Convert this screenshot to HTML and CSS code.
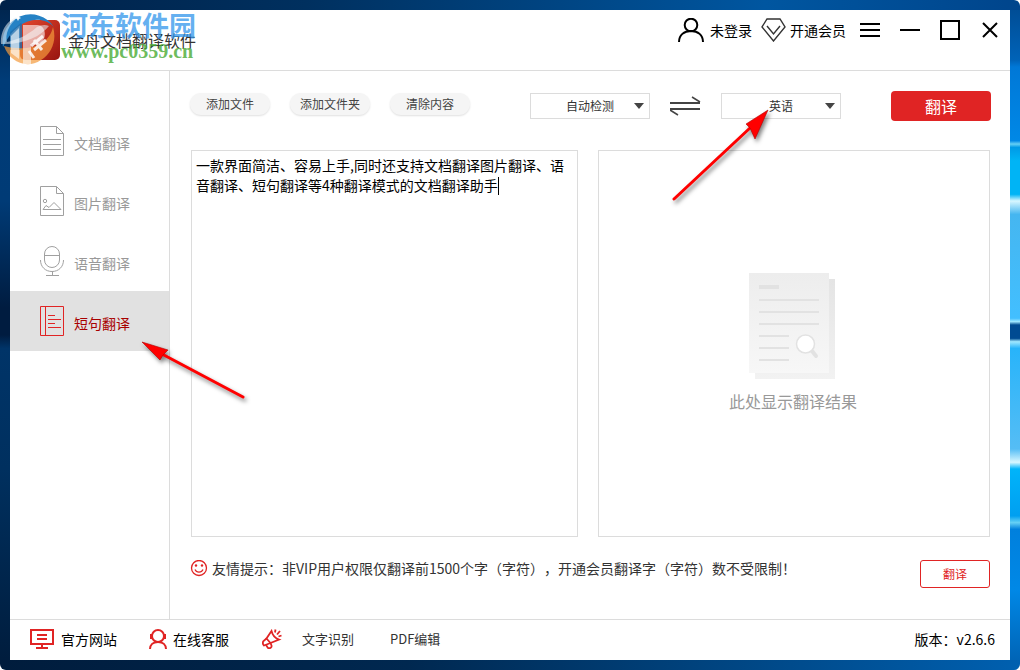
FILE: index.html
```html
<!DOCTYPE html>
<html lang="zh-CN">

<head>
    <title>金舟文档翻译软件</title>
    <meta charset="utf-8">
    <meta name="viewport" content="width=device-width, initial-scale=1.0">
    <link rel="stylesheet" href="styles.css">
</head>

<body>
    <div class="desktop">
        <div class="window">
            <header class="topbar">
                <div class="brand">
                    <svg class="logo" width="50" height="42" viewBox="0 0 50 42">
                        <defs>
                            <linearGradient id="red" x1="0" y1="0" x2="1" y2="1">
                                <stop offset="0" stop-color="#e4472c" />
                                <stop offset="1" stop-color="#971410" />
                            </linearGradient>
                        </defs>
                        <rect x="10" y="1" width="40" height="40" rx="5" fill="url(#red)" />
                    </svg>
                    <h1>金舟文档翻译软件</h1>
                </div>

                <div class="account">
                    <button class="user">
                        <svg width="26" height="24" viewBox="0 0 26 24" fill="none" stroke="#000" stroke-width="2">
                            <circle cx="13" cy="7" r="6.3" />
                            <path d="M1 24C1 17 6 13 13 13s12 4 12 11" />
                        </svg>
                        未登录
                    </button>
                    <button class="vip">
                        <svg width="25" height="24" viewBox="0 0 25 24" fill="none" stroke="#333" stroke-width="1.4">
                            <path d="M6 1h13l5 8-11.5 14L1 9z" />
                            <path d="M6 8l6.500 8L19 8" />
                        </svg>
                        开通会员
                    </button>
                    <button aria-label="菜单">
                        <svg width="20" height="20" viewBox="0 0 20 20" stroke="#000" stroke-width="2">
                            <path d="M0 4h20M0 10h20M0 16h20" />
                        </svg>
                    </button>
                    <button aria-label="最小化">
                        <svg width="20" height="20" viewBox="0 0 20 20" stroke="#000" stroke-width="2">
                            <path d="M0 10h20" />
                        </svg>
                    </button>
                    <button aria-label="最大化">
                        <svg width="20" height="20" viewBox="0 0 20 20" fill="none" stroke="#000" stroke-width="2">
                            <rect x="1" y="1" width="18" height="18" />
                        </svg>
                    </button>
                    <button aria-label="关闭">
                        <svg width="20" height="20" viewBox="0 0 20 20" stroke="#000" stroke-width="2">
                            <path d="M3 3l14 14M17 3L3 17" />
                        </svg>
                    </button>
                </div>
            </header>

            <div class="content">
                <nav>
                    <button>
                        <svg width="24" height="30" viewBox="0 0 24 30" fill="none" stroke="#a0a0a0">
                            <path d="M.5.5h16l7 7v22H.5zM16.500.5v7h7M3 13.500h18M3 18.500h18M3 23.500h18" />
                        </svg>
                        文档翻译
                    </button>
                    <button>
                        <svg width="24" height="30" viewBox="0 0 24 30" fill="none" stroke="#a0a0a0">
                            <path d="M.5.5h16l7 7v22H.5zM16.500.5v7h7" />
                            <circle cx="5" cy="15" r="1.700" />
                            <path d="M3 23.500l3-4 3 2 5-5 7 7z" />
                        </svg>
                        图片翻译
                    </button>
                    <button>
                        <svg width="24" height="30" viewBox="0 0 24 30" fill="none" stroke="#a0a0a0">
                            <rect x="4.500" y=".5" width="15" height="21" rx="7.500" />
                            <path d="M4.500 9.500h15M.5 14c0 7 5 11.500 11.500 11.500S23.500 21 23.500 14M12.500 25.500v4M6 29.500h13" />
                        </svg>
                        语音翻译
                    </button>
                    <button class="valgt">
                        <svg width="24" height="30" viewBox="0 0 24 30" fill="none" stroke="#e02424">
                            <path d="M.5.5h23v29H.5zM5.500.5v29M8 9.500h7M8 13.500h13M8 17.500h7M8 21.500h13" />
                        </svg>
                        短句翻译
                    </button>
                </nav>

                <main>
                    <div class="toolbar">
                        <button class="pill">添加文件</button>
                        <button class="pill">添加文件夹</button>
                        <button class="pill">清除内容</button>

                        <div class="languages">
                            <div class="choice">
                                <select aria-label="源语言">
                                    <option>自动检测</option>
                                    <option>中文</option>
                                </select>
                            </div>
                            <button class="swap" aria-label="交换语言">
                                <svg width="31" height="20" viewBox="0 0 31 20" fill="none" stroke="#444" stroke-width="2">
                                    <path d="M0 7h30M0 13h30" />
                                    <path d="M22 1l8 5M8 19l-8-5" stroke-width="1.500" />
                                </svg>
                            </button>
                            <div class="choice">
                                <select aria-label="目标语言">
                                    <option>英语</option>
                                    <option>日语</option>
                                </select>
                            </div>
                        </div>
                        <button class="translate">翻译</button>
                    </div>

                    <div class="panels">
                        <div class="source">
                            <textarea aria-label="原文" spellcheck="false">一款界面简洁、容易上手,同时还支持文档翻译图片翻译、语音翻译、短句翻译等4种翻译模式的文档翻译助手</textarea>
                            <span class="caret"></span>
                        </div>
                        <section class="result">
                            <svg width="88" height="106" viewBox="0 0 88 106">
                                <defs>
                                    <linearGradient id="paper" x1="0" y1="0" x2="0" y2="1">
                                        <stop offset="0" stop-color="#ededed" />
                                        <stop offset="1" stop-color="#f7f7f7" />
                                    </linearGradient>
                                    <linearGradient id="back" x1="0" y1="0" x2="0" y2="1">
                                        <stop offset="0" stop-color="#e4e4e4" />
                                        <stop offset="1" stop-color="#f2f2f2" />
                                    </linearGradient>
                                </defs>
                                <rect x="6" y="6" width="80" height="100" fill="url(#back)" />
                                <rect x="0" y="0" width="80" height="100" fill="url(#paper)" />
                                <path d="M10 14h20" stroke="#e2e2e2" stroke-width="4" />
                                <path d="M10 27h60M10 39h60M10 51h60M10 63h30M10 75h30M10 87h30" stroke="#e2e2e2" stroke-width="2" />
                                <path d="M63 78l4 5" stroke="#e2e2e2" stroke-width="4" stroke-linecap="round" />
                                <circle cx="56.500" cy="71" r="9" fill="#fff" stroke="#e2e2e2" stroke-width="1.500" />
                            </svg>
                            <p>此处显示翻译结果</p>
                        </section>
                    </div>

                    <div class="tip">
                        <svg width="18" height="18" viewBox="0 0 18 18" fill="none" stroke="#e02424" stroke-width="1.300">
                            <circle cx="9" cy="8" r="7.500" />
                            <path d="M5 9.500c1.500 3.500 6.500 3.500 8 0" />
                            <circle cx="6" cy="5.500" r="1.200" fill="#e02424" stroke="none" />
                            <circle cx="12" cy="5.500" r="1.200" fill="#e02424" stroke="none" />
                        </svg>
                        <p>友情提示<span class="colon">：</span>非VIP用户权限仅翻译前1500个字（字符），开通会员翻译字（字符）数不受限制！</p>
                        <button>翻译</button>
                    </div>
                </main>
            </div>

            <footer>
                <a class="site" href="#">
                    <svg width="24" height="20" viewBox="0 0 24 20" fill="none" stroke="#e02424" stroke-width="2">
                        <path d="M1 1h22v14H1zM12 15v4M6 19h12M7 6h10M7 10h10" />
                    </svg>
                    官方网站
                </a>
                <a class="service" href="#">
                    <svg width="20" height="20" viewBox="0 0 20 20" fill="none" stroke="#e02424" stroke-width="2">
                        <circle cx="10" cy="7" r="6" />
                        <path d="M3 5v5M17 5v5M2 20c0-4 3-7 8-7s8 3 8 7" />
                    </svg>
                    在线客服
                </a>
                <a class="ocr" href="#">
                    <svg width="20" height="20" viewBox="0 0 20 20" fill="none" stroke="#e02424" stroke-width="1.800">
                        <path d="M9.500 2c1 4 3 7 7.500 8.500L8.500 14 4.500 9.500z" />
                        <path d="M4.500 9.500L1.500 12c-1 1.500-.5 3.500.5 4.500l6.500-2.500" />
                        <path d="M4 16l2 3c2 .8 4-.5 3.500-2.500L8.500 14M13 3.500l.5-3M15 5.500l3-3.500M16.500 7.500l3-1" />
                    </svg>
                    文字识别
                </a>
                <a class="pdf" href="#">PDF编辑</a>
                <span class="version">版本<span class="colon">：</span>v2.6.6</span>
            </footer>
        </div>

        <!-- vandmærke -->
        <div class="watermark">
            <svg width="58" height="64" viewBox="0 0 58 64">
                <path d="M3 42A28 28 0 0 1 54 22C40 8 16 14 3 42z" fill="#2582c5" />
                <path d="M10 35V27l11-9 1 1v26H10z" fill="#216fae" opacity=".8" />
                <path d="M1 39C0 24 9 14 19 11 8 20 5 30 7 37c9-2 20-6 30-15 4-2 8-3 12-1-8 10-25 19-48 18z" fill="#e6eef4" opacity=".55" />
                <path d="M4 41c5 15 22 24 37 14 11-7 16-20 12-33-4 19-26 25-49 19z" fill="#f39a3c" opacity=".7" />
                <path d="M11 31l8-8v31l-8-6zM23 20h14c11 0 10 19 0 19h-6v20h-8z" fill="#fff" opacity=".6" />
                <path d="M31 41l12-10M34 45l12-10M34 35l8 10M29 46l5 7" stroke="#fff" stroke-width="3" opacity=".85" />
                <path d="M18 10l1 2 2 1-2 1-1 2-1-2-2-1 2-1z" fill="#fff" />
            </svg>
            <div class="mark">
                <strong>河东软件园</strong>
                <em>www.pc0359.cn</em>
            </div>
        </div>

        <!-- røde pile -->
        <svg class="arrow arrow-language" width="106" height="100" viewBox="0 0 106 100">
            <path d="M4 91L80 20" stroke="#f00" stroke-width="3" stroke-linecap="round" />
            <path d="M98 2L76 16l4 4 5 11z" fill="#f00" stroke="#b00000" stroke-width=".6" />
        </svg>
        <svg class="arrow arrow-menu" width="112" height="70" viewBox="0 0 112 70">
            <path d="M103 59L22 16" stroke="#f00" stroke-width="3" stroke-linecap="round" />
            <path d="M2 4l26 8-5 5-3 5z" fill="#f00" stroke="#b00000" stroke-width=".6" />
        </svg>
    </div>
</body>

</html>
```
FILE: styles.css
```css
* {
    box-sizing: border-box;
}

body {
    margin: 0;
    font-family: "Noto Sans CJK SC", sans-serif;
    font-size: 14px;
    line-height: 20px;
    color: #000;
    background: white;
    text-spacing-trim: space-all;
}

button {
    padding: 0;
    border: 0;
    background: none;
    font: inherit;
    color: inherit;
    cursor: pointer;
}

svg {
    display: block;
    flex-shrink: 0;
}

h1,
p {
    margin: 0;
    font-weight: normal;
}

/* desktop behind the window */
.desktop {
    position: relative;
    min-height: 100vh;
    padding: 10px;
    display: flex;
    border-radius: 6px;
    background:
        linear-gradient(90deg, #002148, #00305f 30%, #0056a0 75%, #00458c) top / 100% 10px no-repeat,
        linear-gradient(90deg, #001c3c, #002850 40%, #0060b0) bottom / 100% 10px no-repeat,
        linear-gradient(#00498f, #0063b8 9%, #0078d7 10%, #0088e6 21%, #65d0f5 21.500%, #009ae6 22%, #00b4f5 24%, #00b4f5 29%, #d8f7ff 30%, #45b6f0 32%, #42bfff 47.500%, #a0e8ff 48%, #004b92 48.500%, #004b92 50.500%, #a0e8ff 51%, #28b4fa 52%, #55bdf5 67%, #d8f7ff 69%, #00b4fa 70%, #009ff0 77%, #65d0f5 78%, #0080dd 79%, #0088e6 88%, #0060b0) right / 10px 100% no-repeat,
        linear-gradient(#00234a, #003c78 12%, #003b76 30%, #001c40 46%, #001c40 50%, #003468 52%, #00305f 70%, #001c3c) left / 10px 100% no-repeat;
}

.window {
    flex: 1;
    display: flex;
    flex-direction: column;
    background: white;
}

.topbar {
    display: flex;
    justify-content: space-between;
    height: 61px;
    padding-right: 10px;
    border-bottom: 1px solid #dcdcdc;
}

.brand {
    display: flex;
    align-items: center;
    gap: 8px;
    padding-bottom: 1px;
}

h1 {
    font-size: 16px;
    color: #333;
}

.account {
    display: flex;
    align-items: center;
    gap: 20px;
    height: 40px;
}

.user,
.vip {
    display: flex;
    align-items: center;
}

.user {
    gap: 6px;
    margin-right: -11px;
}

.vip {
    gap: 4px;
    margin-right: -6px;
}

.content {
    flex: 1;
    display: flex;
}

nav {
    width: 160px;
    padding-top: 40px;
    border-right: 1px solid #dcdcdc;
}

nav button {
    display: flex;
    align-items: center;
    gap: 10px;
    width: 100%;
    height: 60px;
    padding: 3px 0 0 30px;
    color: #999;
}

nav svg {
    margin-bottom: 3px;
}

nav .valgt {
    background: #e1e1e1;
    color: #a80000;
}

main {
    flex: 1;
    display: flex;
    flex-direction: column;
    padding: 20px 20px 31px;
}

.toolbar {
    display: flex;
    align-items: center;
    gap: 20px;
    height: 30px;
    margin-right: -1px;
}

.pill {
    width: 80px;
    height: 22px;
    margin-bottom: 4px;
    border-radius: 11px;
    background: #f5f5f5;
    box-shadow: 0 1px 2px #e0e0e0;
    font-size: 12px;
    color: #444;
}

.languages {
    display: flex;
    align-items: center;
    gap: 20px;
    margin-left: auto;
    margin-right: 30px;
}

.choice {
    position: relative;
}

.choice::after {
    content: "";
    position: absolute;
    top: 10px;
    right: 6px;
    border: 5px solid transparent;
    border-top: 6px solid #444;
    border-bottom: 0;
    pointer-events: none;
}

select {
    display: block;
    appearance: none;
    width: 120px;
    height: 26px;
    padding: 0;
    border: 1px solid #dcdcdc;
    background: white;
    font: inherit;
    font-size: 12px;
    color: #333;
    text-align: center;
    text-align-last: center;
}

.translate {
    width: 100px;
    height: 30px;
    border-radius: 4px;
    background: #e02424;
    font-size: 16px;
    color: white;
}

.panels {
    flex: 1;
    display: grid;
    grid-template-columns: 387fr 392fr;
    gap: 20px;
    margin: 29px 0 23px 1px;
}

.source {
    position: relative;
    display: flex;
}

textarea {
    flex: 1;
    min-width: 0;
    padding: 4px;
    border: 1px solid #dcdcdc;
    outline: 0;
    resize: none;
    font: inherit;
    color: #000;
}

.caret {
    position: absolute;
    top: 27px;
    left: 307px;
    width: 1px;
    height: 18px;
    background: #000;
}

.result {
    display: flex;
    flex-direction: column;
    align-items: center;
    justify-content: center;
    gap: 12px;
    padding: 0 2px 4px 0;
    border: 1px solid #dcdcdc;
    font-size: 16px;
    color: #999;
}

.tip {
    display: flex;
    align-items: flex-start;
    gap: 4px;
    line-height: 16px;
    color: #333;
}

.tip button {
    width: 70px;
    height: 28px;
    margin-left: auto;
    border: 1px solid #e02424;
    border-radius: 3px;
    font-size: 12px;
    color: #e02424;
}

/* centred colon */
.colon {
    font-family: "Noto Sans CJK TC", sans-serif;
}

footer {
    display: flex;
    align-items: center;
    height: 41px;
    padding: 0 15px 2px 20px;
    border-top: 1px solid #dcdcdc;
}

footer a {
    display: flex;
    align-items: center;
    color: #000;
    text-decoration: none;
}

.site {
    gap: 7px;
}

.service {
    gap: 5px;
    margin-left: 31px;
}

.ocr {
    gap: 20px;
    margin-left: 33px;
}

.pdf {
    margin-left: 36px;
}

footer .ocr,
footer .pdf {
    font-size: 13px;
    color: #333;
}

.version {
    margin-left: auto;
}

.watermark {
    position: absolute;
    top: 5px;
    left: 0;
    display: flex;
    gap: 3px;
    pointer-events: none;
}

.mark {
    display: flex;
    flex-direction: column;
    padding-top: 4px;
}

.mark strong {
    font-size: 27px;
    line-height: 32px;
    color: rgba(50, 150, 235, 0.75);
}

.mark em {
    font-family: "Liberation Serif", serif;
    font-size: 20px;
    font-style: normal;
    font-weight: bold;
    color: rgba(70, 170, 50, 0.8);
}

.arrow {
    position: absolute;
    pointer-events: none;
    filter: drop-shadow(2px 3px 2px rgba(0, 0, 0, 0.5));
}

.arrow-language {
    top: 108px;
    left: 670px;
}

.arrow-menu {
    top: 338px;
    left: 140px;
}
```
